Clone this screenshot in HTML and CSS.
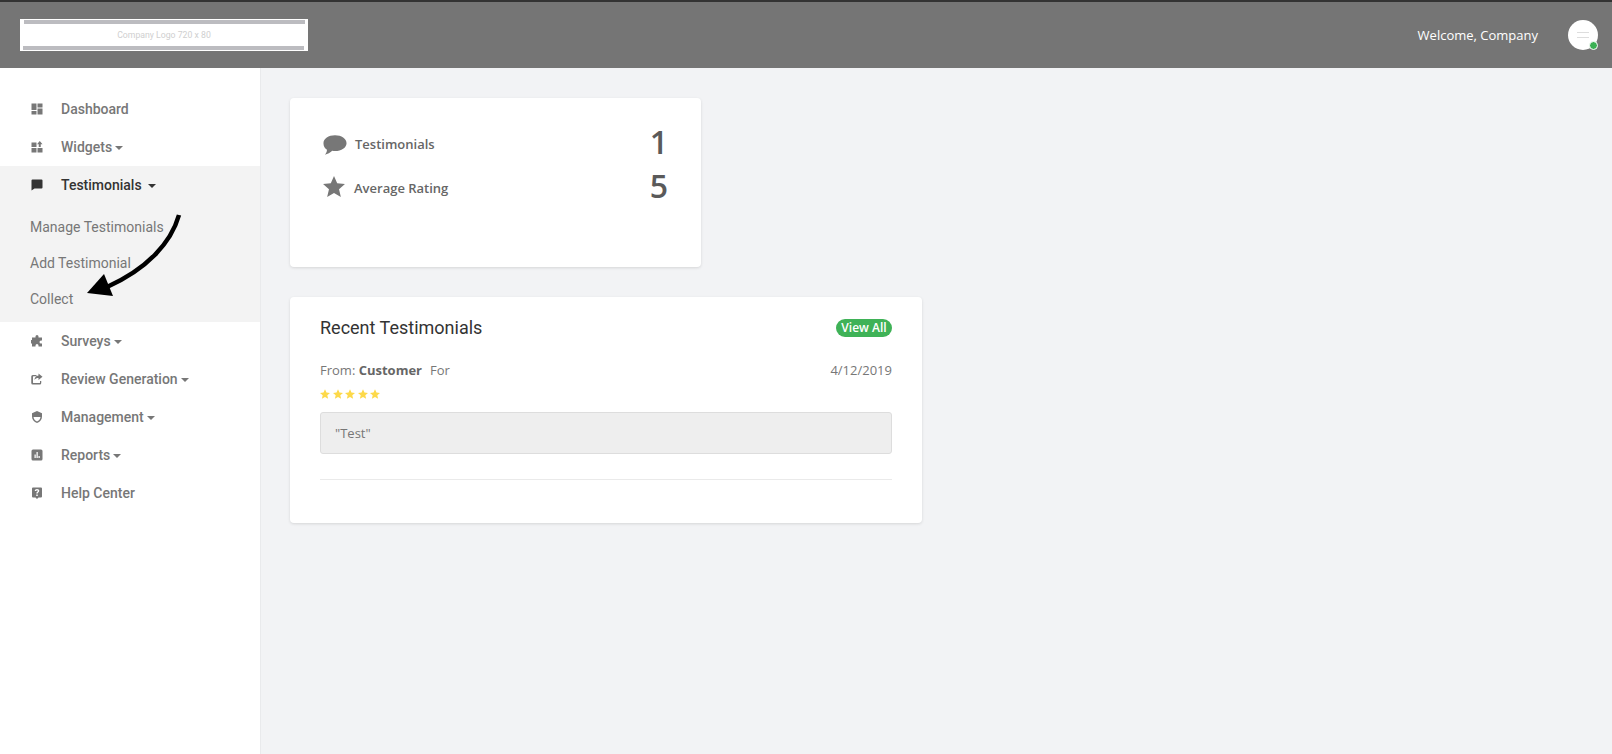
FILE: index.html
```html
<!DOCTYPE html>
<html lang="en">
<head>
<meta charset="utf-8">
<title>Testimonials</title>
<link rel="stylesheet" href="styles.css">
</head>
<body>
<header class="topbar">
  <div class="logo">
    <span class="logo-bar"></span>
    <span class="logo-text">Company Logo 720 x 80</span>
    <span class="logo-bar logo-bar-low"></span>
  </div>
  <div class="user">
    <span class="welcome">Welcome, Company</span>
    <span class="avatar"><span class="avatar-lines"></span><span class="online"></span></span>
  </div>
</header>
<div class="layout">
  <aside class="sidebar">
    <ul class="nav">
      <li class="nav-item"><svg class="nav-icon" viewBox="0 0 24 24"><path d="M1 1h10v13H1zM13 1h10v8H13zM13 11h10v12H13zM1 16h10v7H1z"/></svg>Dashboard</li>
      <li class="nav-item"><svg class="nav-icon" viewBox="0 0 24 24"><path d="M1 3h10v9H1zM1 14h10v9H1zM13 14h10v9H13zM17.500 0l5.500 6.500h-3.500V12h-4V6.500H12z"/></svg>Widgets<span class="caret"></span></li>
      <li class="nav-group">
        <div class="nav-item nav-active"><svg class="nav-icon" viewBox="0 0 24 24"><path d="M3 1h18a2 2 0 0 1 2 2v14a2 2 0 0 1-2 2H7l-6 4V3a2 2 0 0 1 2-2z"/></svg>Testimonials<span class="caret caret-far"></span></div>
        <ul class="subnav">
          <li class="sub-item">Manage Testimonials</li>
          <li class="sub-item">Add Testimonial</li>
          <li class="sub-item">Collect</li>
        </ul>
      </li>
      <li class="nav-item"><svg class="nav-icon" viewBox="0 0 24 24"><path d="M9 3a3 3 0 0 1 6 0v2h7v6h-2a3 3 0 0 0 0 6h2v6h-7v-2a3 3 0 0 0-6 0v2H2v-6H1a3 3 0 0 1 0-7h1V5h7z"/></svg>Surveys<span class="caret"></span></li>
      <li class="nav-item"><svg class="nav-icon" viewBox="0 0 24 24"><path d="M15 1l8 6.500-8 6.500v-4c-4 0-6 1-8 4 0-5 3-8.500 8-9zM4 4h7v2.500H5a1 1 0 0 0-1 1V19a1 1 0 0 0 1 1h12a1 1 0 0 0 1-1v-3h2.500v4a3 3 0 0 1-3 3h-14a3 3 0 0 1-3-3V7a3 3 0 0 1 3-3z"/></svg>Review Generation<span class="caret"></span></li>
      <li class="nav-item"><svg class="nav-icon" viewBox="0 0 24 24"><path fill-rule="evenodd" d="M12 0l10 4.500V11c0 6-4 11-10 13C6 22 2 17 2 11V4.500zm0 3v9H5c.5 4 3 7.500 7 9zm0 9v9c4-1.500 6.500-5 7-9z"/></svg>Management<span class="caret"></span></li>
      <li class="nav-item"><svg class="nav-icon" viewBox="0 0 24 24"><path fill-rule="evenodd" d="M4 1h16a3 3 0 0 1 3 3v16a3 3 0 0 1-3 3H4a3 3 0 0 1-3-3V4a3 3 0 0 1 3-3zm3 10v7h2.500v-7zm4-5v12h2.500V6zm4 8v4h2.500v-4z"/></svg>Reports<span class="caret"></span></li>
      <li class="nav-item"><svg class="nav-icon" viewBox="0 0 24 24"><path fill-rule="evenodd" d="M4 1h16a2 2 0 0 1 2 2v16a2 2 0 0 1-2 2h-5l-3 3-3-3H4a2 2 0 0 1-2-2V3a2 2 0 0 1 2-2zm6.500 14v3h3v-3zM12 4c-2.500 0-4.500 1.500-4.500 4h3c0-1 .5-1.500 1.500-1.500s1.500.5 1.500 1.300c0 1.700-3 1.700-3 5.200h3c0-2 3-2.500 3-5.500C16.500 5.500 14.500 4 12 4z"/></svg>Help Center</li>
    </ul>
    <svg class="arrow" viewBox="0 0 100 90" width="100" height="90">
      <path class="arrow-shaft" d="M92 2C84 30 60 56 20 74"/>
      <path class="arrow-head" d="M0 80L17 61L26 83Z"/>
    </svg>
  </aside>
  <main class="content">
    <section class="card card-stats">
      <div class="stat">
        <svg class="stat-icon speech-icon" viewBox="0 0 26 22" width="24" height="21"><path d="M13 0c7 0 12.500 3.700 12.500 8.500S20 17 13 17c-1 0-2 0-3-.2C8 18.800 5 20.500 2 21c1.300-1.500 2.300-3.300 2.300-5.400C1.700 14 .5 11.300.5 8.500.5 3.700 6 0 13 0z"/></svg>
        <span class="stat-label">Testimonials</span>
        <span class="stat-value">1</span>
      </div>
      <div class="stat stat-second">
        <svg class="stat-icon star-icon" viewBox="0 0 24 23" width="22" height="21"><path d="M12 0l3.500 8 8.500.800-6.500 5.700 2 8.500L12 18.500 4.500 23l2-8.500L0 8.800 8.500 8z"/></svg>
        <span class="stat-label">Average Rating</span>
        <span class="stat-value">5</span>
      </div>
    </section>
    <section class="card card-recent">
      <div class="recent-head">
        <h2 class="recent-title">Recent Testimonials</h2>
        <span class="badge">View All</span>
      </div>
      <div class="meta">
        <span>From: <b class="meta-name">Customer</b><span class="meta-for">For</span></span>
        <span>4/12/2019</span>
      </div>
      <div class="stars">
        <svg class="star" viewBox="0 0 24 23"><path d="M12 0l3.500 8 8.500.800-6.500 5.700 2 8.500L12 18.500 4.500 23l2-8.500L0 8.800 8.500 8z"/></svg>
        <svg class="star" viewBox="0 0 24 23"><path d="M12 0l3.500 8 8.500.800-6.500 5.700 2 8.500L12 18.500 4.500 23l2-8.500L0 8.800 8.500 8z"/></svg>
        <svg class="star" viewBox="0 0 24 23"><path d="M12 0l3.500 8 8.500.800-6.500 5.700 2 8.500L12 18.500 4.500 23l2-8.500L0 8.800 8.500 8z"/></svg>
        <svg class="star" viewBox="0 0 24 23"><path d="M12 0l3.500 8 8.500.800-6.500 5.700 2 8.500L12 18.500 4.500 23l2-8.500L0 8.800 8.500 8z"/></svg>
        <svg class="star" viewBox="0 0 24 23"><path d="M12 0l3.500 8 8.500.800-6.500 5.700 2 8.500L12 18.500 4.500 23l2-8.500L0 8.800 8.500 8z"/></svg>
      </div>
      <div class="quote">"Test"</div>
      <hr class="rule">
    </section>
  </main>
</div>
</body>
</html>
```
FILE: styles.css
```css
* { box-sizing: border-box; }
html, body { height: 100%; }
body {
  margin: 0;
  height: 754px;
  overflow: hidden;
  background: #f2f3f5;
  font-family: "Open Sans", sans-serif;
  color: #777;
  display: flex;
  flex-direction: column;
}
ul { list-style: none; margin: 0; padding: 0; }

.topbar {
  height: 68px;
  flex: none;
  background: #757575;
  border-top: 2px solid #333;
  display: flex;
  align-items: center;
  justify-content: space-between;
  padding: 0 14px 0 20px;
}
.logo {
  width: 288px;
  height: 32px;
  background: #fff;
  display: flex;
  flex-direction: column;
  align-items: center;
  justify-content: space-between;
  padding: 1px 0;
}
.logo-bar { display: block; width: 281px; height: 4px; background: #bcbcc0; margin-left: 1px; }
.logo-bar-low { margin-left: -1px; }
.logo-text { font: 8.700px/1 Roboto, sans-serif; color: #cfcfcf; }
.user { display: flex; align-items: center; gap: 30px; }
.welcome { font-size: 13px; font-weight: 500; color: #fff; }
.avatar {
  position: relative;
  width: 30px;
  height: 30px;
  border-radius: 50%;
  background: #fff;
  display: flex;
  align-items: center;
  justify-content: center;
}
.avatar-lines { width: 12px; height: 6px; border-top: 1px solid #ddd; border-bottom: 1px solid #ddd; }
.online {
  position: absolute;
  right: 0;
  bottom: 0;
  width: 9px;
  height: 9px;
  border-radius: 50%;
  background: #3bb154;
  border: 1.500px solid #fff;
}

.layout { flex: 1; display: flex; min-height: 0; }
.sidebar {
  position: relative;
  width: 261px;
  flex: none;
  background: #fff;
  border-right: 1px solid #e9eaec;
  padding-top: 22px;
  font-family: Roboto, sans-serif;
}
.nav-item {
  height: 38px;
  display: flex;
  align-items: center;
  padding-left: 31px;
  font-size: 14px;
  font-weight: 500;
  color: #777;
}
.nav-icon { width: 12px; height: 12px; margin-right: 18px; fill: #777; flex: none; }
.caret {
  width: 0;
  height: 0;
  margin: 1px 0 0 3px;
  border-left: 4px solid transparent;
  border-right: 4px solid transparent;
  border-top: 4px solid #777;
}
.nav-group { background: #f3f3f3; padding-bottom: 5px; }
.nav-active { color: #333; }
.nav-active .nav-icon { fill: #333; }
.nav-active .caret { border-top-color: #333; }
.caret-far { margin-left: 6px; }
.subnav { padding-top: 5px; }
.sub-item {
  height: 36px;
  display: flex;
  align-items: center;
  padding-left: 30px;
  font-size: 14px;
  color: #777;
}
.arrow { position: absolute; left: 87px; top: 145px; overflow: visible; }
.arrow-shaft { fill: none; stroke: #000; stroke-width: 4.500; }
.arrow-head { fill: #000; }

.content {
  flex: 1;
  padding: 30px 0 0 29px;
  display: flex;
  flex-direction: column;
  align-items: flex-start;
  gap: 30px;
}
.card {
  background: #fff;
  border-radius: 4px;
  box-shadow: 0 1px 3px rgba(0, 0, 0, .12);
}
.card-stats {
  width: 411px;
  height: 169px;
  padding: 30px 33px 0 33px;
}
.stat { display: flex; align-items: center; height: 32px; }
.stat-second { margin-top: 12px; }
.stat-icon { fill: #777; flex: none; }
.speech-icon { margin-top: 3px; }
.star-icon { margin-bottom: 3px; }
.stat-label { font-size: 13px; font-weight: 600; color: #666; margin-left: 8px; }
.stat-second .stat-label { margin-left: 9px; }
.stat-value { margin: -5px 0 0 auto; font-size: 32px; font-weight: 600; color: #5a5a5a; line-height: 32px; }

.card-recent { width: 632px; height: 226px; padding: 20px 30px 0; }
.recent-head { display: flex; align-items: center; justify-content: space-between; }
.recent-title { margin: 0; font: 400 18px/21px Roboto, sans-serif; color: #333; }
.badge {
  width: 56px;
  height: 18px;
  border-radius: 9px;
  background: #3fb257;
  color: #fff;
  font-size: 12px;
  font-weight: 600;
  line-height: 18px;
  text-align: center;
}
.meta {
  display: flex;
  justify-content: space-between;
  margin-top: 23px;
  font-size: 13px;
  line-height: 18px;
  color: #777;
}
.meta-name { font-weight: 700; color: #666; }
.meta-for { margin-left: 8px; }
.stars { display: flex; gap: 2.500px; margin-top: 10px; height: 10px; }
.star { width: 10px; height: 10px; fill: #fdd94a; }
.quote {
  margin-top: 13px;
  height: 42px;
  padding: 0 14px;
  background: #eee;
  border: 1px solid #ddd;
  border-radius: 3px;
  font-size: 13px;
  line-height: 40px;
  color: #777;
}
.rule { margin: 25px 0 0; border: 0; border-top: 1px solid #eaeaea; }
```
